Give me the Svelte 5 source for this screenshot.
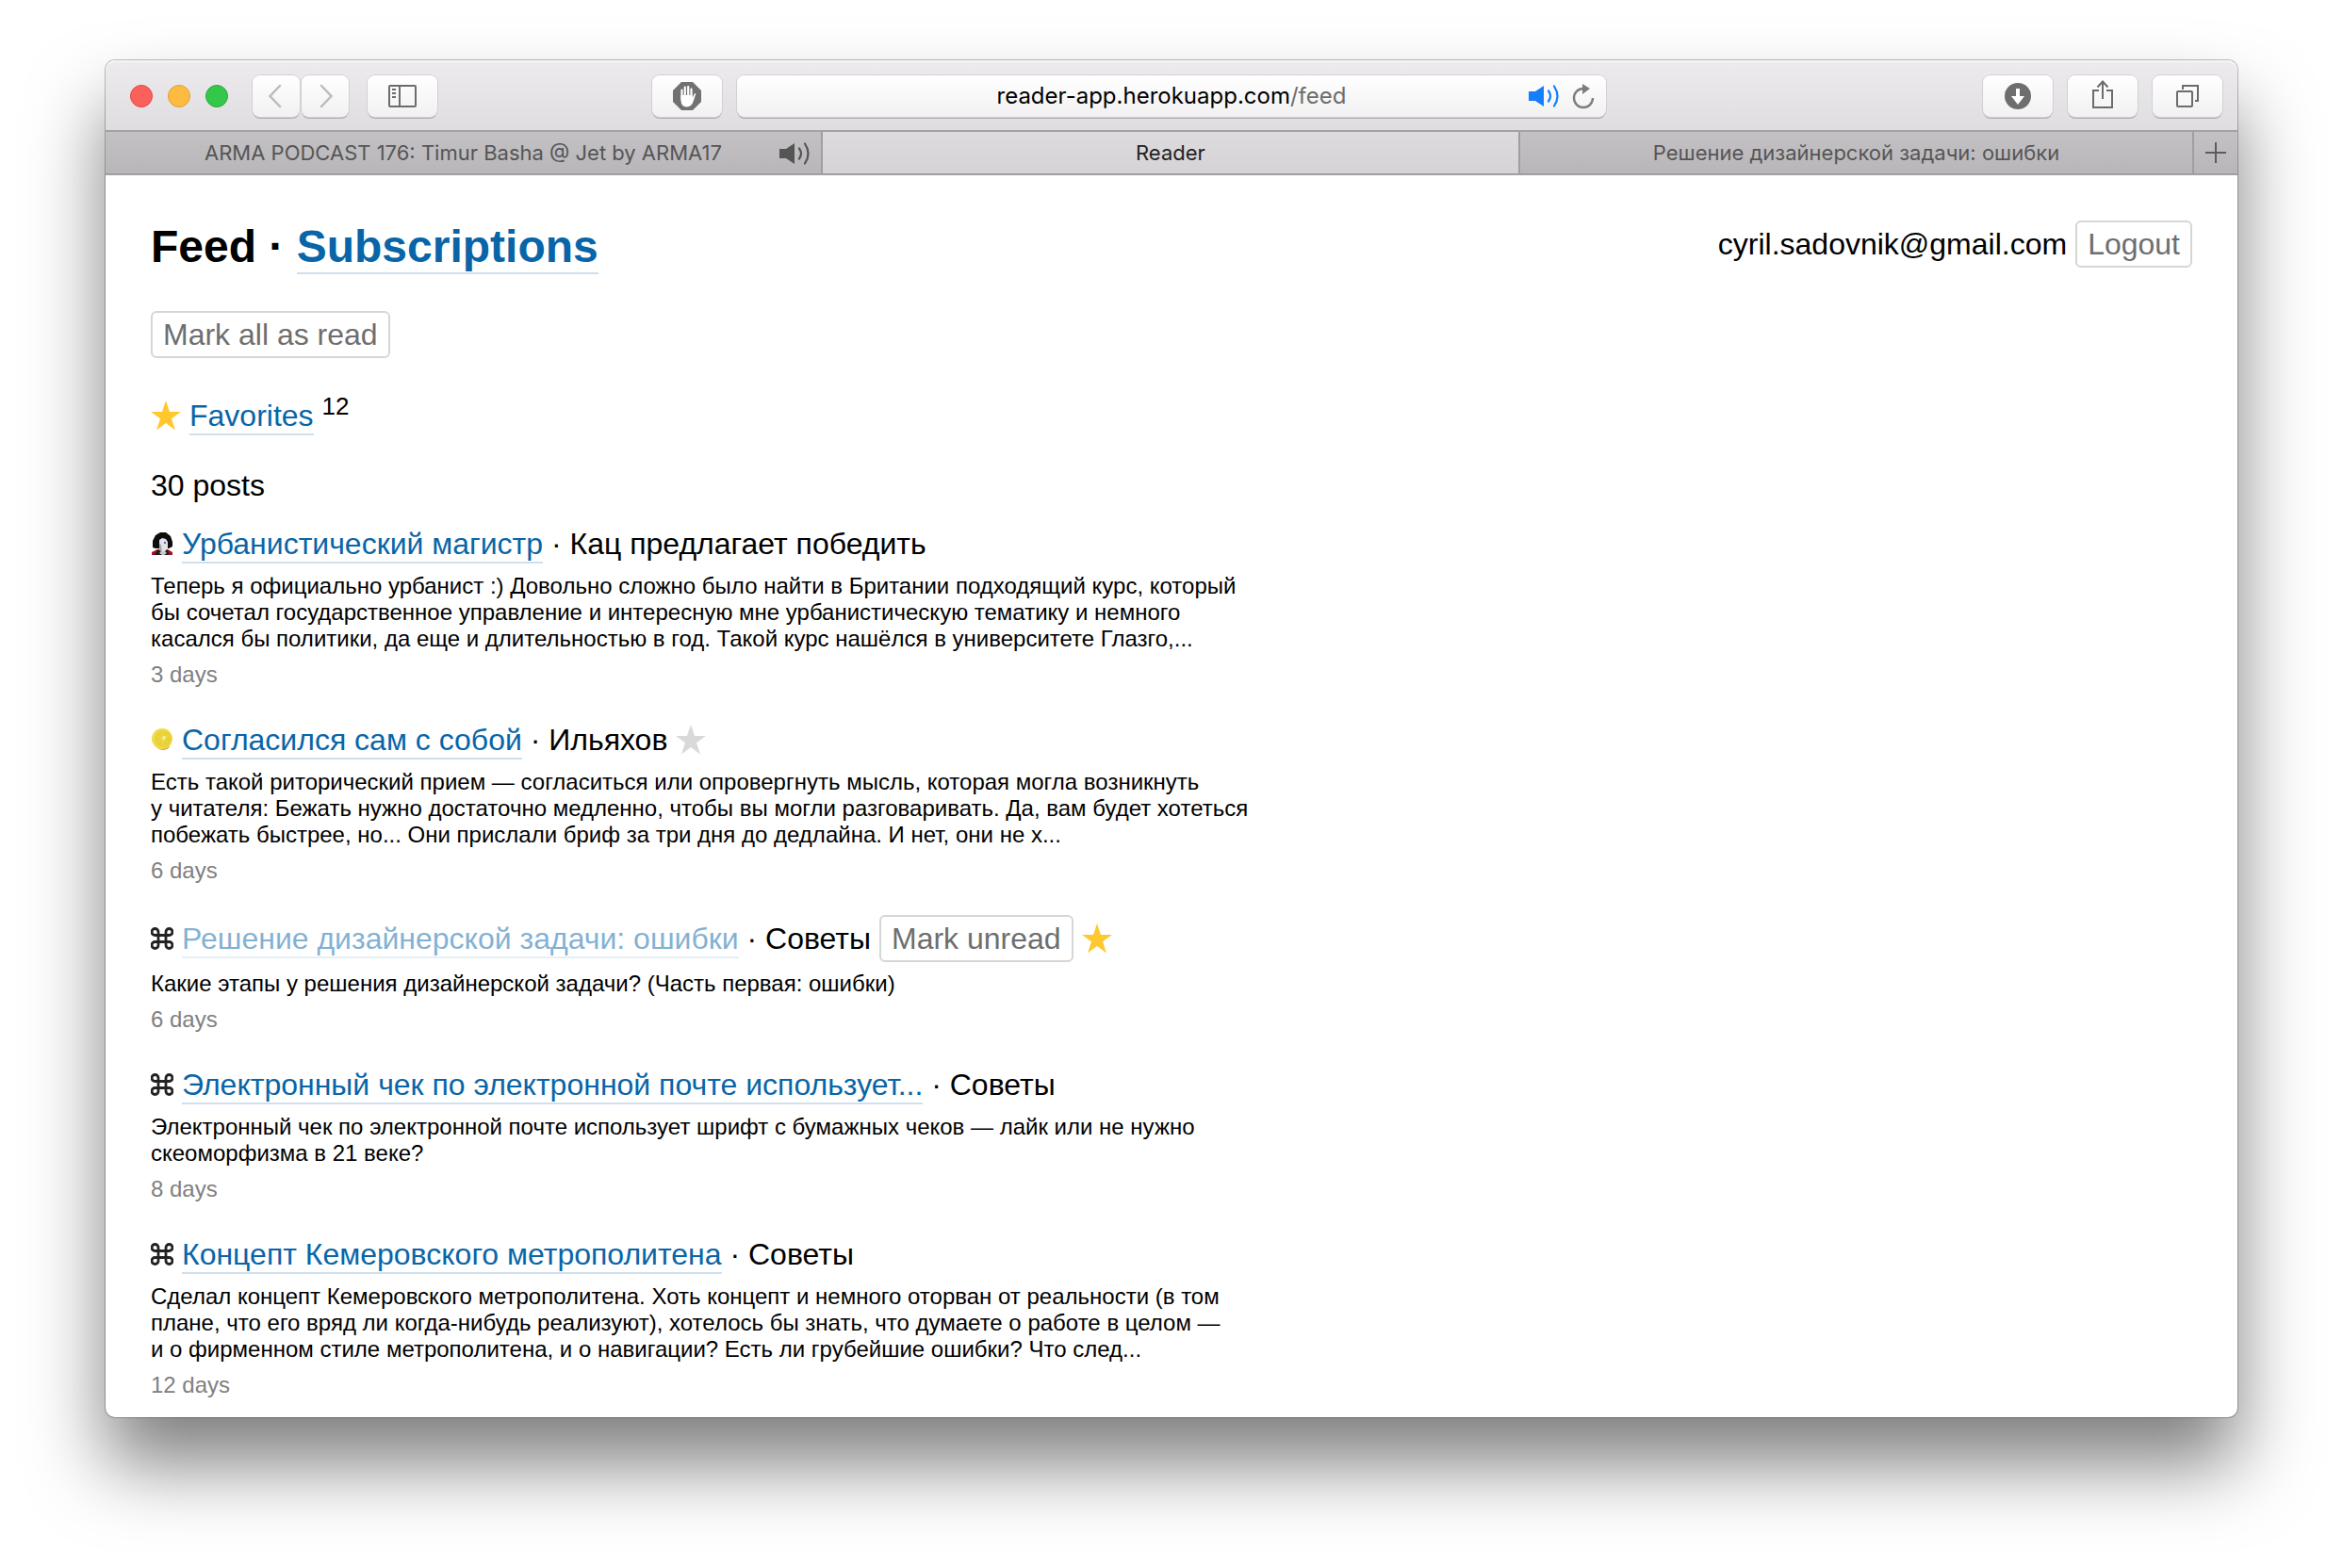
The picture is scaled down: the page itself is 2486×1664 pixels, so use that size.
<script>
  const posts = [
    {
      icon: 'person',
      title: 'Урбанистический магистр',
      source: 'Кац предлагает победить',
      lines: [
        'Теперь я официально урбанист :) Довольно сложно было найти в Британии подходящий курс, который',
        'бы сочетал государственное управление и интересную мне урбанистическую тематику и немного',
        'касался бы политики, да еще и длительностью в год. Такой курс нашёлся в университете Глазго,...'
      ],
      age: '3 days'
    },
    {
      icon: 'lemon',
      title: 'Согласился сам с собой',
      source: 'Ильяхов',
      star: 'off',
      lines: [
        'Есть такой риторический прием — согласиться или опровергнуть мысль, которая могла возникнуть',
        'у читателя: Бежать нужно достаточно медленно, чтобы вы могли разговаривать. Да, вам будет хотеться',
        'побежать быстрее, но... Они прислали бриф за три дня до дедлайна. И нет, они не х...'
      ],
      age: '6 days'
    },
    {
      icon: 'command',
      title: 'Решение дизайнерской задачи: ошибки',
      source: 'Советы',
      read: true,
      star: 'on',
      lines: ['Какие этапы у решения дизайнерской задачи? (Часть первая: ошибки)'],
      age: '6 days'
    },
    {
      icon: 'command',
      title: 'Электронный чек по электронной почте использует...',
      source: 'Советы',
      lines: [
        'Электронный чек по электронной почте использует шрифт с бумажных чеков — лайк или не нужно',
        'скеоморфизма в 21 веке?'
      ],
      age: '8 days'
    },
    {
      icon: 'command',
      title: 'Концепт Кемеровского метрополитена',
      source: 'Советы',
      lines: [
        'Сделал концепт Кемеровского метрополитена. Хоть концепт и немного оторван от реальности (в том',
        'плане, что его вряд ли когда-нибудь реализуют), хотелось бы знать, что думаете о работе в целом —',
        'и о фирменном стиле метрополитена, и о навигации? Есть ли грубейшие ошибки? Что след...'
      ],
      age: '12 days'
    }
  ];
</script>

{#snippet speaker()}
  <svg class="speaker" viewBox="0 0 34 26" aria-hidden="true">
    <path d="M0 8h7l9-6v22l-9-6H0z" fill="currentColor" />
    <path d="M21 7.500q4 5.500 0 11M27 2.500q7 10.500 0 21" fill="none" stroke="currentColor" stroke-width="2.200" stroke-linecap="round" />
  </svg>
{/snippet}

{#snippet star()}
  <svg class="star" viewBox="0 0 32 32" aria-hidden="true">
    <path d="M16 0l4 12h12l-10 7.300 4 12.200-10-7.500-10 7.500 4-12.200L0 12h12z" fill="currentColor" />
  </svg>
{/snippet}

{#snippet favicon(kind)}
  <svg class="favicon" viewBox="0 0 24 24" aria-hidden="true">
    {#if kind === 'person'}
      <path d="M1 24v-3l6-3h11l5 3v3z" fill="#a01420" />
      <path d="M4 24l3-5h11l1 5z" fill="#22181a" />
      <path d="M2 16V9l3-6 5-3h6l5 4 2 6v5l-4 2H5z" fill="#0d0d0d" />
      <path d="M9 8l3-2 4 1 2 3v7l-3 3h-4l-2-3z" fill="#e3e2e4" />
      <path d="M9 12v7l3 2-1-8z" fill="#a9a6a8" />
      <path d="M14 10h2v2h-2z" fill="#5a62c8" />
      <path d="M9 22l2-2h4l2 2-3 2h-2z" fill="#c9cbd0" />
    {:else if kind === 'lemon'}
      <ellipse cx="13" cy="18" rx="7" ry="5" fill="#c99a4a" />
      <circle cx="12" cy="11" r="11" fill="#f0dc48" />
      <circle cx="13" cy="11" r="9" fill="#e8d136" />
      <path d="M13 4v14M7 8l12 7M7 15l12-8" stroke="#efdc55" stroke-width="1" />
      <circle cx="14" cy="10" r="2" fill="#f6ec96" />
    {:else}
      <path
        d="M8 8V5a3.500 3.500 0 1 0-3.500 3.500h15A3.500 3.500 0 1 0 16 5v14a3.500 3.500 0 1 0 3.500-3.500h-15A3.500 3.500 0 1 0 8 19z"
        fill="none"
        stroke="#222"
        stroke-width="2.800"
      />
    {/if}
  </svg>
{/snippet}

<div class="desktop">
  <div class="window">
    <header class="toolbar">
      <div class="side">
        <div class="lights">
          <button class="light close" aria-label="Close"></button>
          <button class="light minimize" aria-label="Minimize"></button>
          <button class="light zoom" aria-label="Zoom"></button>
        </div>
        <div class="history">
          <button class="tool half" aria-label="Back">
            <svg width="16" height="26" viewBox="0 0 16 26"><path d="M12 2L1.500 13 12 24" fill="none" stroke="#bcbcbc" stroke-width="2.500" stroke-linecap="round" /></svg>
          </button>
          <button class="tool half" aria-label="Forward">
            <svg width="16" height="26" viewBox="0 0 16 26"><path d="M4 2l10.500 11L4 24" fill="none" stroke="#bcbcbc" stroke-width="2.500" stroke-linecap="round" /></svg>
          </button>
        </div>
        <button class="tool" aria-label="Sidebar">
          <svg width="30" height="24" viewBox="0 0 30 24" fill="none" stroke="#6c6c6c" stroke-width="2">
            <rect x="1" y="1" width="28" height="22" rx="1" />
            <path d="M12 1v22M4 5h4M4 9h4M4 13h4" />
          </svg>
        </button>
      </div>

      <div class="center">
        <button class="tool" aria-label="Content blocker">
          <svg width="30" height="30" viewBox="0 0 30 30">
            <path d="M9 0h12l9 9v12l-9 9H9l-9-9V9z" fill="#717171" />
            <path d="M9.500 18V8.500M12.800 15V5.500M16.200 15V5M19.500 16V7.500" stroke="#fff" stroke-width="2.200" stroke-linecap="round" />
            <path d="M8.400 14h12.200v3l2.200-4.500q1.200-1.200 1.500 0L22 19.500q-2 7-7.500 7t-6.100-7z" fill="#fff" />
          </svg>
        </button>
        <div class="address">
          <span class="url">reader-app.herokuapp.com<span class="path">/feed</span></span>
          <div class="address-tools">
            <button class="plain blue" aria-label="Mute tab">{@render speaker()}</button>
            <button class="plain" aria-label="Reload">
              <svg width="24" height="28" viewBox="0 0 24 28">
                <path d="M12 6a10 10 0 1 0 10 10" fill="none" stroke="#7d7d7d" stroke-width="2.400" />
                <path d="M11 1l8 5-8 6z" fill="#7d7d7d" />
              </svg>
            </button>
          </div>
        </div>
      </div>

      <div class="side end">
        <button class="tool" aria-label="Downloads">
          <svg width="28" height="28" viewBox="0 0 28 28">
            <circle cx="14" cy="14" r="14" fill="#6e6e6e" />
            <path d="M12 6h4v8h5l-7 9-7-9h5z" fill="#fff" />
          </svg>
        </button>
        <button class="tool" aria-label="Share">
          <svg class="share" width="22" height="30" viewBox="0 0 22 30" fill="none" stroke="#6c6c6c" stroke-width="2">
            <path d="M7 11H1v18h20V11h-6M11 20V2M5.500 7.500L11 1.500l5.500 6" />
          </svg>
        </button>
        <button class="tool" aria-label="Show all tabs">
          <svg width="24" height="24" viewBox="0 0 24 24" fill="none" stroke="#6c6c6c" stroke-width="2">
            <rect x="1" y="7" width="16" height="16" rx="1" />
            <path d="M7 5V1h16v16h-3" />
          </svg>
        </button>
      </div>
    </header>

    <nav class="tabs" aria-label="Tabs">
      <button class="tab first">
        ARMA PODCAST 176: Timur Basha @ Jet by ARMA17
        <span class="tab-sound">{@render speaker()}</span>
      </button>
      <button class="tab active">Reader</button>
      <button class="tab last">Решение дизайнерской задачи: ошибки</button>
      <button class="new-tab" aria-label="New tab">
        <svg width="22" height="22" viewBox="0 0 22 22"><path d="M11 0v22M0 11h22" stroke="#5c5c5c" stroke-width="2" /></svg>
      </button>
    </nav>

    <main>
      <div class="page-head">
        <h1>Feed · <a href="#subscriptions">Subscriptions</a></h1>
        <div class="account">
          <span>cyril.sadovnik@gmail.com</span>
          <button class="btn">Logout</button>
        </div>
      </div>

      <button class="btn">Mark all as read</button>

      <div class="favorites">
        <span class="on">{@render star()}</span>
        <span><a href="#favorites">Favorites</a> <sup>12</sup></span>
      </div>

      <p class="count">30 posts</p>

      <div class="posts">
        {#each posts as post}
          <article>
            <div class="title">
              {@render favicon(post.icon)}
              <h2><a href="#post" class:read={post.read}>{post.title}</a> · {post.source}</h2>
              {#if post.read}
                <button class="btn">Mark unread</button>
              {/if}
              {#if post.star}
                <button class="plain {post.star}" aria-label="Favorite">{@render star()}</button>
              {/if}
            </div>
            <p class="excerpt">
              {#each post.lines as line}<span>{line}</span>{/each}
            </p>
            <p class="age">{post.age}</p>
          </article>
        {/each}
      </div>
    </main>
  </div>
</div>

<style>
  :global(body) {
    margin: 0;
    background: #fff;
  }

  .desktop {
    padding: 64px 112px 160px;
    overflow: hidden;
    font-family: 'Liberation Sans', Arial, sans-serif;
    font-size: 32px;
    line-height: 36px;
    color: #000;
  }

  button {
    margin: 0;
    padding: 0;
    border: 0;
    background: none;
    font: inherit;
    color: inherit;
  }

  svg {
    display: block;
    flex: none;
  }

  .window {
    border-radius: 10px;
    background: #fff;
    box-shadow:
      0 0 0 1px rgba(0, 0, 0, 0.25),
      0 50px 80px rgba(0, 0, 0, 0.5);
  }

  .toolbar {
    box-sizing: border-box;
    display: flex;
    justify-content: space-between;
    align-items: center;
    height: 74px;
    padding: 2px 16px 0;
    border-radius: 10px 10px 0 0;
    background: linear-gradient(#edebee, #dfdde0);
    box-shadow: inset 0 2px 0 #f6f5f7;
    font-family: Inter, sans-serif;
  }

  .side {
    flex: 1 1 0;
    display: flex;
    align-items: center;
    gap: 20px;
  }

  .end {
    justify-content: flex-end;
    gap: 16px;
  }

  .lights {
    display: flex;
    gap: 16px;
    padding: 0 6px 0 10px;
  }

  .light {
    width: 24px;
    height: 24px;
    border: 1px solid #e2463f;
    border-radius: 50%;
    background: #fc605c;
  }

  .minimize {
    border-color: #dfa033;
    background: #fdbc40;
  }

  .zoom {
    border-color: #27a835;
    background: #34c84a;
  }

  .history {
    display: flex;
    gap: 2px;
  }

  .tool,
  .address {
    box-sizing: border-box;
    height: 44px;
    border-radius: 8px;
    background: linear-gradient(#fff, #f1f1f1);
    box-shadow:
      0 0 0 1px #d2d0d3,
      0 2px 0 #aeacaf;
  }

  .tool {
    display: flex;
    flex: none;
    align-items: center;
    justify-content: center;
    width: 74px;
  }

  .half {
    width: 50px;
  }

  .share {
    margin-bottom: 4px;
  }

  /* The right padding balances the blocker button, so the address stays in the middle. */
  .center {
    box-sizing: border-box;
    display: flex;
    flex: none;
    gap: 16px;
    width: 49.4%;
    padding-right: 90px;
  }

  .address {
    position: relative;
    flex: 1;
    display: flex;
    align-items: center;
    justify-content: center;
    font-size: 24px;
  }

  .path {
    color: #6d6d6d;
  }

  .address-tools {
    position: absolute;
    right: 12px;
    display: flex;
    align-items: center;
    gap: 12px;
  }

  .speaker {
    width: 34px;
    height: 26px;
  }

  .blue {
    color: #147efb;
  }

  .tabs {
    box-sizing: border-box;
    display: flex;
    height: 48px;
    border-top: 2px solid #a3a1a4;
    border-bottom: 2px solid #a0a0a0;
    background: linear-gradient(#c3c1c4, #b8b6b9);
    font-family: Inter, sans-serif;
    font-size: 22px;
    color: #555;
  }

  .tab {
    position: relative;
    flex: 740 1 0;
    border-right: 2px solid #a09ea1;
  }

  .first {
    flex-grow: 761;
  }

  .last {
    flex-grow: 715;
  }

  .active {
    background: linear-gradient(#dddbde, #d5d3d6);
    color: #222;
  }

  .tab-sound {
    position: absolute;
    right: 10px;
    top: 10px;
  }

  .new-tab {
    display: flex;
    align-items: center;
    justify-content: center;
    width: 46px;
  }

  main {
    padding: 48px 48px 20px;
  }

  .page-head {
    display: flex;
    justify-content: space-between;
    align-items: flex-start;
    margin-bottom: 40px;
  }

  h1,
  h2,
  p {
    margin: 0;
    font-size: inherit;
    font-weight: normal;
  }

  h1 {
    font-size: 48px;
    font-weight: bold;
    line-height: 56px;
  }

  a {
    padding-bottom: 1px;
    border-bottom: 2px solid #cfe0ed;
    color: #0865a8;
    text-decoration: none;
  }

  .read {
    opacity: 0.5;
  }

  .account {
    display: flex;
    align-items: center;
    gap: 9px;
  }

  .btn {
    box-sizing: border-box;
    height: 50px;
    padding: 0 11px;
    border: 2px solid #d6d6d6;
    border-radius: 6px;
    color: #6e6e6e;
  }

  .favorites {
    display: flex;
    align-items: center;
    gap: 9px;
    height: 44px;
    margin: 39px 0 30px;
  }

  sup {
    font-size: 26px;
    line-height: 0;
    vertical-align: 12px;
  }

  .count {
    line-height: 44px;
    margin-bottom: 18px;
  }

  .star {
    width: 32px;
    height: 32px;
  }

  .on {
    color: #ffc82e;
  }

  .off {
    color: #d9d9d9;
  }

  .posts {
    display: flex;
    flex-direction: column;
    gap: 33px;
  }

  .title {
    display: flex;
    align-items: center;
    gap: 9px;
    min-height: 44px;
    margin-bottom: 9px;
  }

  .favicon {
    width: 24px;
    height: 24px;
  }

  .excerpt,
  .age {
    font-size: 24px;
    line-height: 28px;
  }

  .excerpt span {
    display: block;
  }

  .age {
    margin-top: 10px;
    color: #808080;
  }
</style>
